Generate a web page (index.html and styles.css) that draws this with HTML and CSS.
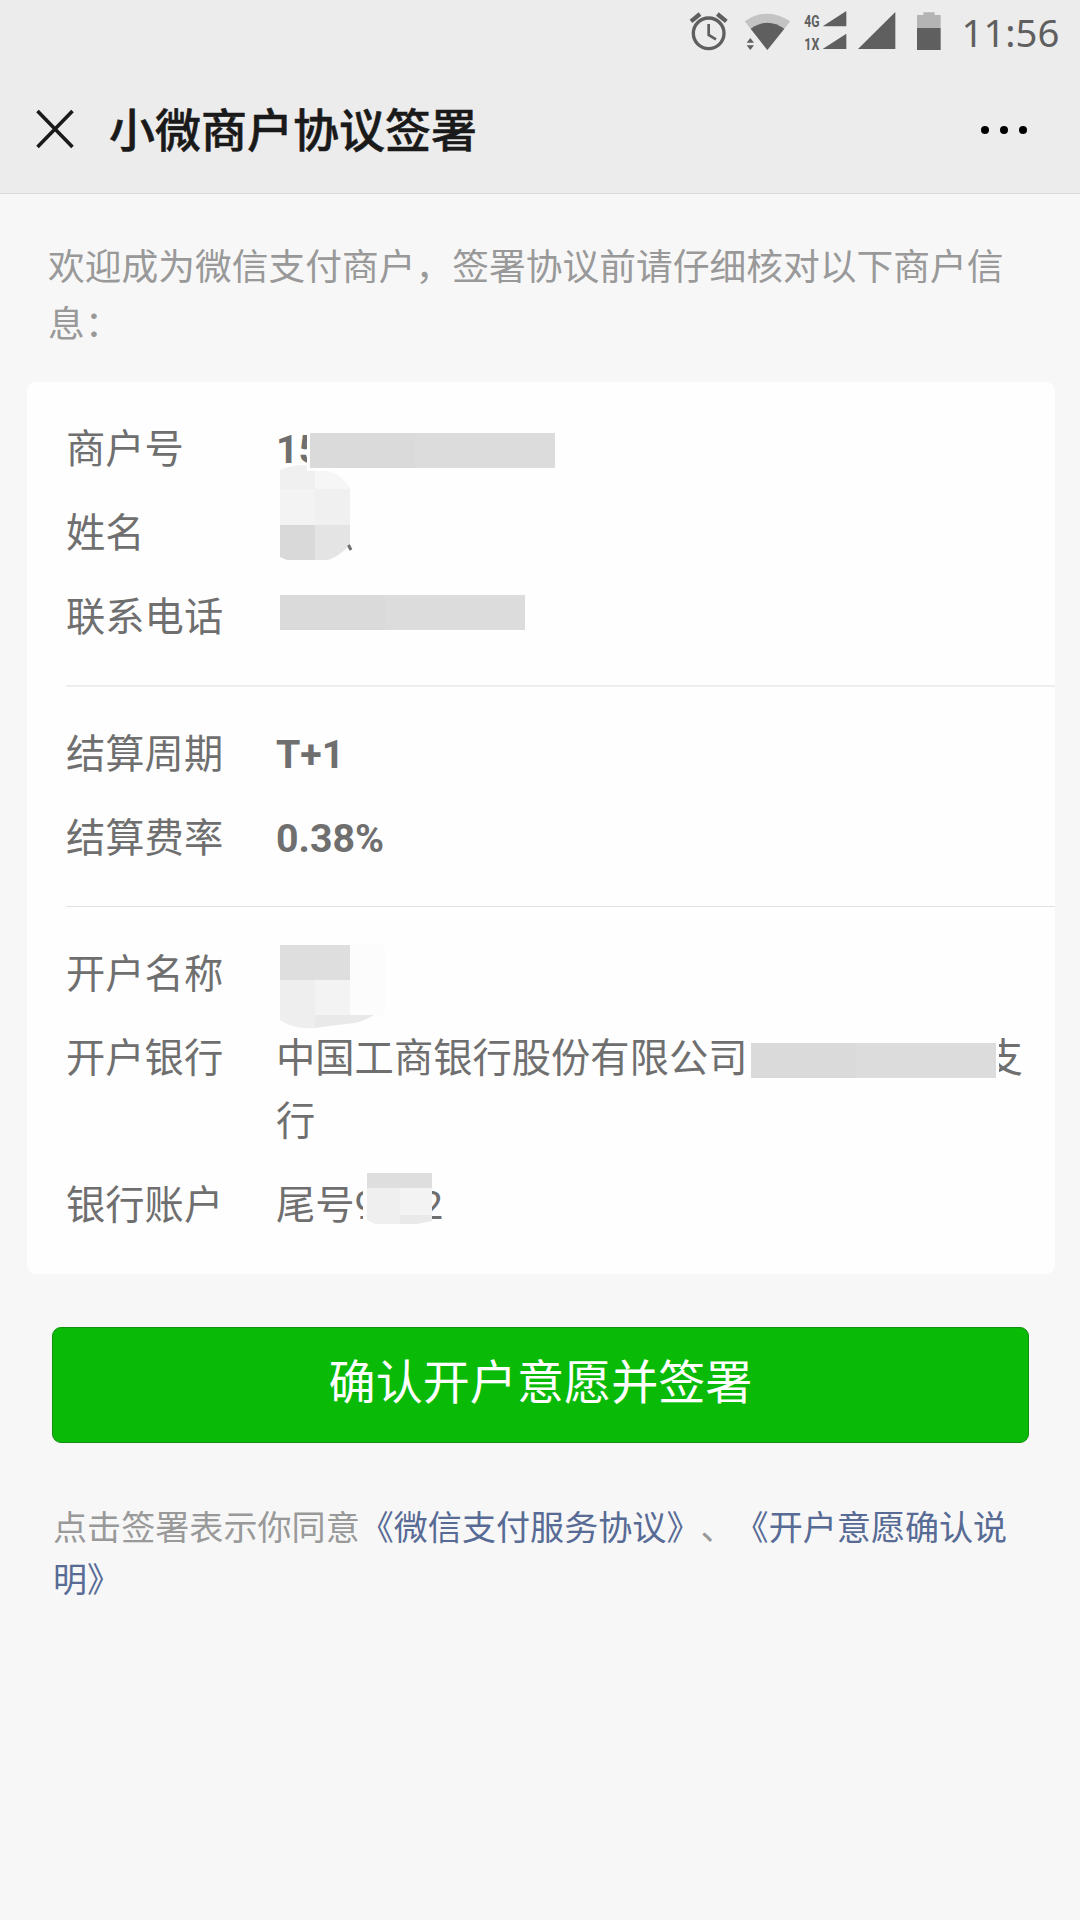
FILE: index.html
```
<!DOCTYPE html>
<html lang="zh-CN">
<head>
    <meta charset="UTF-8">
    <meta name="viewport" content="width=device-width, initial-scale=1.0">
    <title>小微商户协议签署</title>
    <link rel="stylesheet" href="styles.css">
</head>
<body>

<div class="status-bar">
    <svg class="status-icons" width="260" height="60" viewBox="0 0 780 180">
        <!-- alarm -->
        <g fill="none" stroke="#5f5f5f" stroke-width="10">
            <circle cx="116" cy="100" r="46"/>
            <path d="M63 64L90 42M142 42L169 64" stroke-width="13"/>
            <path d="M116 72V105L138 118" stroke-width="8"/>
        </g>
        <!-- wifi -->
        <path d="M224 64Q292 18 361 64L292 150Z" fill="#c3c3c3"/>
        <path d="M242 86Q292 50 343 86L292 150Z" fill="#5f5f5f"/>
        <path d="M230 128L241 114L252 128ZM230 136H252L241 150Z" fill="#5f5f5f"/>
        <!-- signal -->
        <text class="net" x="403" y="80" textLength="46" lengthAdjust="spacingAndGlyphs">4G</text>
        <text class="net" x="403" y="149" textLength="45" lengthAdjust="spacingAndGlyphs">1X</text>
        <path d="M458 79H529V33ZM458 147H529V101ZM564 147H676V36Z" fill="#5f5f5f"/>
        <!-- battery -->
        <path d="M741 45H760V37H794V45H812V84H741Z" fill="#b4b4b4"/>
        <path d="M741 84H812V150H741Z" fill="#5f5f5f"/>
    </svg>
    <span class="clock">11:56</span>
</div>

<div class="nav">
    <svg class="close" width="40" height="40" viewBox="0 0 40 40">
        <path d="M2.5 2L37.5 38M37.5 2L2.5 38" stroke="#1a1a1a" stroke-width="3.6"/>
    </svg>
    <h1>小微商户协议签署</h1>
    <div class="more"><i></i><i></i><i></i></div>
</div>

<p class="intro">欢迎成为微信支付商户，签署协议前请仔细核对以下商户信息：</p>

<div class="card">
    <div class="section">
        <div class="row row-top">
            <span class="label">商户号</span>
            <span class="value"><b>15</b><i class="mask mask-id"></i></span>
        </div>
        <div class="row">
            <span class="label">姓名</span>
            <span class="value">
                <svg class="blob blob-name" width="75" height="97" viewBox="0 0 75 97">
                    <path d="M0 5Q12 0 25 0L36 6V24H0Z" fill="#f0f0f0"/>
                    <path d="M35 6H48Q62 10 71 24H35Z" fill="#f6f6f6"/>
                    <path d="M0 24H35V60H0Z" fill="#f3f3f3"/>
                    <path d="M35 24H70V60H35Z" fill="#f0f0f0"/>
                    <path d="M0 60H35V95H7L0 92Z" fill="#d9d9d9"/>
                    <path d="M35 60H70V80Q58 92 48 95H35Z" fill="#e4e4e4"/>
                    <path d="M68.500 80L71 85" stroke="#6f6f6f" stroke-width="3"/>
                </svg>
            </span>
        </div>
        <div class="row">
            <span class="label">联系电话</span>
            <span class="value"><i class="mask mask-phone"></i></span>
        </div>
    </div>
    <div class="section">
        <div class="row">
            <span class="label">结算周期</span>
            <span class="value"><b>T+1</b></span>
        </div>
        <div class="row">
            <span class="label">结算费率</span>
            <span class="value"><b>0.38%</b></span>
        </div>
    </div>
    <div class="section">
        <div class="row">
            <span class="label">开户名称</span>
            <span class="value">
                <svg class="blob blob-account" width="106" height="84" viewBox="0 0 106 84">
                    <path d="M70 0H105V70H70Z" fill="#fcfcfc"/>
                    <path d="M0 0H70V35H0Z" fill="#dedede"/>
                    <path d="M0 35H35V83Q15 85 0 75Z" fill="#eeeeee"/>
                    <path d="M35 35H70V70H35Z" fill="#f3f3f3"/>
                    <path d="M35 70H94Q82 78 66 79Q48 81 35 83Z" fill="#e9e9e9"/>
                </svg>
            </span>
        </div>
        <div class="row">
            <span class="label">开户银行</span>
            <span class="value">中国工商银行股份有限公司<span class="gap-bank"></span>支行<i class="mask mask-bank"></i></span>
        </div>
        <div class="row">
            <span class="label">银行账户</span>
            <span class="value">尾号9<span class="gap-digits"></span>2
                <svg class="blob blob-digits" width="69" height="52" viewBox="0 0 69 52">
                    <path d="M0 0H69V52H0Z" fill="#fefefe"/>
                    <path d="M4 0H69V15H4Z" fill="#dedede"/>
                    <path d="M4 15H37V51H12L4 47Z" fill="#efefef"/>
                    <path d="M37 15H69V42H37Z" fill="#f3f3f3"/>
                    <path d="M37 42H69V48L54 51H37Z" fill="#e9e9e9"/>
                </svg>
            </span>
        </div>
    </div>
</div>

<button class="submit">确认开户意愿并签署</button>

<p class="terms">点击签署表示你同意<a>《微信支付服务协议》</a>、<a>《开户意愿确认说明》</a></p>

</body>
</html>
```
FILE: styles.css
```
body {
    margin: 0;
    min-height: 1920px;
    background-color: #f7f7f7;
    font-family: Roboto, "Noto Sans CJK SC", sans-serif;
    color: #6f6f6f;
    text-spacing-trim: space-all;
}

.status-bar {
    display: flex;
    height: 64px;
    padding-left: 670px;
    background-color: #ececec;
}

.status-icons {
    overflow: visible;
    flex: none;
}

.net {
    font-family: Roboto, sans-serif;
    font-size: 48px;
    font-weight: bold;
    fill: #5f5f5f;
}

.clock {
    margin-left: 31.5px;
    font-family: "Noto Sans", sans-serif;
    font-size: 38.3px;
    line-height: 64px;
    color: #5f5f5f;
}

.nav {
    display: flex;
    align-items: center;
    height: 129px;
    padding: 0 53px 0 35px;
    background-color: #ececec;
    border-bottom: 1px solid #dadada;
}

.close {
    flex: none;
}

.nav h1 {
    margin: 5px 0 0 34px;
    font-size: 46px;
    font-weight: 500;
    line-height: 60px;
    color: #1a1a1a;
    -webkit-text-stroke: 0.5px #1a1a1a;
}

.more {
    display: flex;
    gap: 11px;
    margin: 2px 0 0 auto;
}

.more i {
    width: 8px;
    height: 8px;
    border-radius: 50%;
    background-color: #000;
}

.intro {
    margin: 46px 48px 29px;
    font-size: 36.75px;
    line-height: 56.5px;
    color: #999;
}

.card {
    margin: 0 25px 0 27px;
    border-radius: 9px;
    background-color: #fefefe;
    font-size: 39.3px;
    line-height: 63px;
}

.section {
    display: flex;
    flex-direction: column;
    gap: 21px;
    margin-left: 39px;
    padding: 37px 0 35px;
}

.section + .section {
    border-top: 1px solid #e2e2e2;
}

.section:nth-child(2) {
    border-top: 2px solid #eee;
}

.section:last-child {
    padding-bottom: 36px;
}

.row {
    display: flex;
}

.label {
    flex: none;
    width: 210px;
}

.value {
    position: relative;
    flex: 1;
    min-height: 63px;
    padding-right: 20px;
}

/* keeps the hidden account id above the name block */
.row-top {
    position: relative;
    z-index: 1;
}

.mask {
    position: absolute;
    width: 245px;
    height: 35px;
    background: linear-gradient(90deg, #dadada 105px, #dcdcdc 105px);
    box-shadow: 0 0 0 3px #fefefe;
}

.mask-id {
    left: 34px;
    top: 14px;
}

.mask-phone {
    left: 4px;
    top: 8px;
}

.mask-bank {
    left: 475px;
    top: 15px;
}

.gap-bank {
    display: inline-block;
    width: 236px;
}

.gap-digits {
    display: inline-block;
    width: 44px;
}

.blob {
    position: absolute;
}

.blob-name {
    left: 4px;
    top: -38px;
}

.blob-account {
    left: 4px;
    top: 1px;
}

.blob-digits {
    left: 87px;
    top: -2px;
}

.submit {
    display: block;
    box-sizing: border-box;
    width: 977px;
    height: 116px;
    margin: 53px 0 0 52px;
    padding: 0 0 14px;
    border: 1px solid #128f10;
    border-radius: 9px;
    background-color: #09bb07;
    color: #fff;
    font-family: inherit;
    font-size: 47.1px;
}

.terms {
    margin: 59px 51px 0 53px;
    font-size: 34.1px;
    line-height: 52.3px;
    color: #999;
}

.terms a {
    color: #576b95;
}
```
